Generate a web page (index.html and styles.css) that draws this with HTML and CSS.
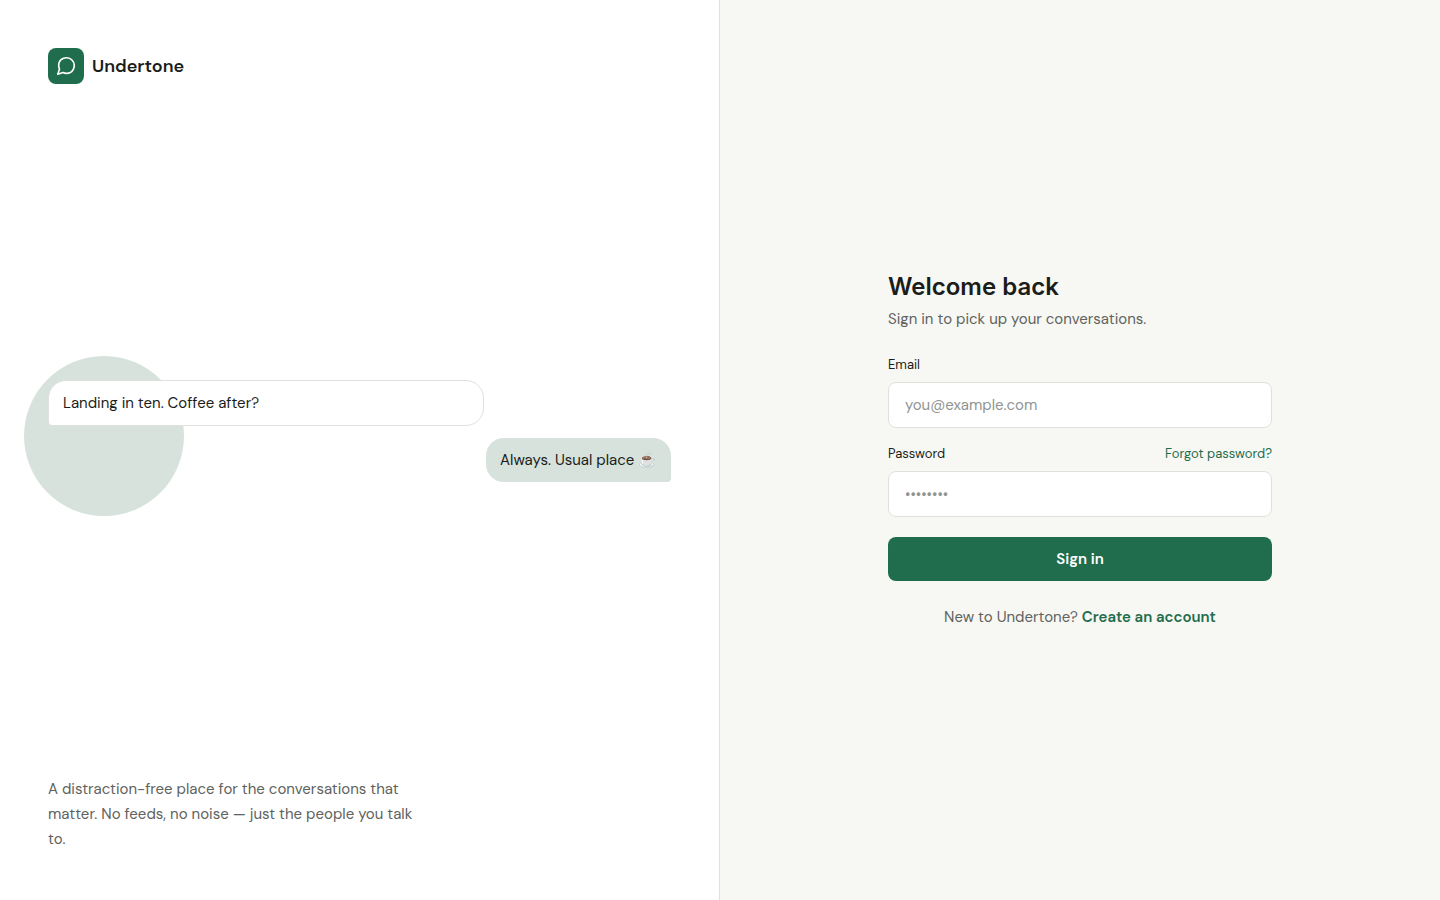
FILE: index.html
```html
<!doctype html>
<html lang="en">
<head>
    <meta charset="UTF-8">
    <meta name="viewport" content="width=device-width, initial-scale=1.0">
    <title>Sign in - Undertone</title>
    <link rel="stylesheet" href="styles.css">
</head>
<body>
    <div class="page">
        <!-- Brand side -->
        <section class="intro">
            <div class="brand">
                <span class="brand-mark">
                    <svg width="22" height="22" viewBox="0 0 24 24" fill="none" stroke="currentColor" stroke-width="1.8" stroke-linecap="round" stroke-linejoin="round" aria-hidden="true">
                        <path d="M21 11.5a8.38 8.38 0 0 1-.9 3.8 8.5 8.5 0 0 1-7.6 4.7 8.38 8.38 0 0 1-3.8-.9L3 21l1.9-5.7a8.38 8.38 0 0 1-.9-3.8 8.5 8.5 0 0 1 4.7-7.6 8.38 8.38 0 0 1 3.8-.9h.5a8.48 8.48 0 0 1 8 8v.5z"/>
                    </svg>
                </span>
                <span class="brand-name">Undertone</span>
            </div>

            <div class="chat">
                <p class="bubble bubble-in">Landing in ten. Coffee after?</p>
                <p class="bubble bubble-out">Always. Usual place ☕</p>
            </div>

            <p class="tagline">A distraction-free place for the conversations that matter. No feeds, no noise — just the people you talk to.</p>
        </section>

        <!-- Sign in side -->
        <main class="signin">
            <div class="panel">
                <h1>Welcome back</h1>
                <p class="lead">Sign in to pick up your conversations.</p>

                <form>
                    <div class="field">
                        <div class="field-head">
                            <label for="email">Email</label>
                        </div>
                        <input type="email" id="email" placeholder="you@example.com">
                    </div>
                    <div class="field">
                        <div class="field-head">
                            <label for="password">Password</label>
                            <a href="#">Forgot password?</a>
                        </div>
                        <input type="password" id="password" placeholder="••••••••">
                    </div>
                    <button type="submit">Sign in</button>
                </form>

                <p class="signup">New to Undertone? <a href="#">Create an account</a></p>
            </div>
        </main>
    </div>
</body>
</html>
```

FILE: styles.css
```css
* {
    box-sizing: border-box;
}
body {
    margin: 0;
    font-family: "DM Sans", Inter, "Noto Color Emoji", sans-serif;
    font-size: 15px;
    line-height: 24px;
    color: #1b1d1a;
    background: #f7f8f3;
}
h1, p {
    margin: 0;
}
a {
    color: #1f6d4d;
    text-decoration: none;
}
.page {
    display: grid;
    grid-template-columns: 1fr 1fr;
    min-height: 100vh;
}

/* Brand side */
.intro {
    display: flex;
    flex-direction: column;
    justify-content: space-between;
    padding: 48px;
    background: #fff;
    border-right: 1px solid #dfe1dc;
}
.brand {
    display: flex;
    align-items: center;
    gap: 8px;
}
.brand-mark {
    display: flex;
    align-items: center;
    justify-content: center;
    width: 36px;
    height: 36px;
    border-radius: 8px;
    background: #1f6d4d;
    color: #fff;
}
.brand-name {
    font-size: 18px;
    font-weight: 600;
}
.chat {
    position: relative;
    display: flex;
    flex-direction: column;
    gap: 12px;
}
/* soft circle behind the messages */
.chat::before {
    content: "";
    position: absolute;
    top: -24px;
    left: -24px;
    width: 160px;
    height: 160px;
    border-radius: 50%;
    background: #d7e2dc;
}
.bubble {
    position: relative;
    padding: 10px 14px;
    border-radius: 18px;
}
.bubble-in {
    width: 70%;
    background: #fff;
    border: 1px solid #dfe1dc;
    border-bottom-left-radius: 4px;
}
.bubble-out {
    align-self: flex-end;
    background: #d7e2dc;
    border-bottom-right-radius: 4px;
}
.tagline {
    max-width: 384px;
    line-height: 25px;
    color: #60625e;
}

/* Sign in side */
.signin {
    display: flex;
    align-items: center;
    justify-content: center;
    padding: 24px;
}
.panel {
    width: 100%;
    max-width: 384px;
}
h1 {
    margin-bottom: 4px;
    font-family: Inter, sans-serif;
    font-size: 24px;
    font-weight: 600;
    line-height: 32px;
}
.lead {
    margin-bottom: 24px;
    color: #60625e;
}
.field {
    margin-bottom: 16px;
}
.field-head {
    display: flex;
    justify-content: space-between;
    margin-bottom: 8px;
    font-size: 13px;
    line-height: 19px;
}
input {
    display: block;
    width: 100%;
    height: 46px;
    padding: 0 16px;
    border: 1px solid #dfe1dc;
    border-radius: 8px;
    background: #fff;
    color: inherit;
    font: inherit;
}
input::placeholder {
    color: #929491;
}
button {
    display: block;
    width: 100%;
    height: 44px;
    margin-top: 20px;
    border: none;
    border-radius: 8px;
    background: #1f6d4d;
    color: #fff;
    font: inherit;
    font-weight: 600;
    cursor: pointer;
}
.signup {
    margin-top: 24px;
    text-align: center;
    color: #60625e;
}
.signup a {
    font-weight: 600;
}
```
